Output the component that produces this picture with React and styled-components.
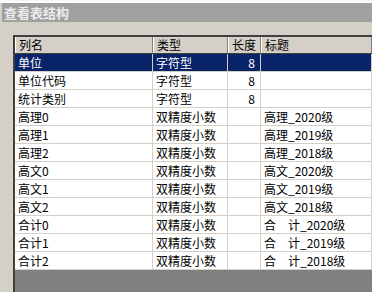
import React from 'react'
import styled, { createGlobalStyle } from 'styled-components'

const GlobalStyle = createGlobalStyle`
  html, body {
    margin: 0;
    padding: 0;
    background: #d4d0c8;
  }
  body {
    font-family: "Noto Sans CJK SC", "Liberation Sans", sans-serif;
    font-size: 12px;
  }
`

const Window = styled.div`
  width: 372px;
  height: 292px;
  background: #d4d0c8;
  display: flex;
  flex-direction: column;
  overflow: hidden;
`

const TopStrip = styled.div`
  height: 3px;
  background: #ffffff;
  border-top: 1px solid #f4f4f4;
  box-sizing: border-box;
`

const TitleBar = styled.div`
  height: 19px;
  margin-left: 2px;
  padding-left: 2px;
  background: #a0a0a0;
  color: #ececec;
  font-weight: bold;
  font-size: 13px;
  line-height: 19px;
  letter-spacing: 0;
`

const Body = styled.div`
  flex: 1;
  display: flex;
  padding: 13px 0 0 13px;
  min-height: 0;
`

const Grid = styled.div`
  flex: 1;
  display: flex;
  flex-direction: column;
  background: #808080;
  border-top: 2px solid #404040;
  border-left: 2px solid #404040;
  box-shadow: inset 1px 1px 0 #808080;
  min-width: 0;
`

const Row = styled.div`
  display: grid;
  grid-template-columns: 138px 75px 33px 1fr;
  height: ${({ $head }) => ($head ? '17px' : '18px')};
  background: ${({ $head, $selected }) =>
    $head ? '#d4d0c8' : $selected ? '#0a246a' : '#ffffff'};
  color: ${({ $selected }) => ($selected ? '#ffffff' : '#000000')};
  border-bottom: 1px solid ${({ $head }) => ($head ? '#404040' : '#d4d0c8')};
  box-sizing: border-box;
`

const Cell = styled.div`
  display: flex;
  align-items: center;
  justify-content: ${({ $right }) => ($right ? 'flex-end' : 'flex-start')};
  padding: ${({ $right }) => ($right ? '0 5px 0 0' : '0 0 0 3px')};
  border-right: 1px solid ${({ $head }) => ($head ? '#808080' : '#d4d0c8')};
  border-left: ${({ $head }) => ($head ? '1px solid #ffffff' : 'none')};
  white-space: pre;
  overflow: hidden;
  line-height: 16px;
`

const columns = ['列名', '类型', '长度', '标题']

const rows = [
  ['单位', '字符型', '8', ''],
  ['单位代码', '字符型', '8', ''],
  ['统计类别', '字符型', '8', ''],
  ['高理0', '双精度小数', '', '高理_2020级'],
  ['高理1', '双精度小数', '', '高理_2019级'],
  ['高理2', '双精度小数', '', '高理_2018级'],
  ['高文0', '双精度小数', '', '高文_2020级'],
  ['高文1', '双精度小数', '', '高文_2019级'],
  ['高文2', '双精度小数', '', '高文_2018级'],
  ['合计0', '双精度小数', '', '合　计_2020级'],
  ['合计1', '双精度小数', '', '合　计_2019级'],
  ['合计2', '双精度小数', '', '合　计_2018级'],
]

const App = () => {
  return (
    <>
      <GlobalStyle />
      <Window>
        <TopStrip />
        <TitleBar>查看表结构</TitleBar>
        <Body>
          <Grid>
            <Row $head>
              {columns.map((c) => (
                <Cell $head key={c}>{c}</Cell>
              ))}
            </Row>
            {rows.map((r, i) => (
              <Row key={i} $selected={i === 0}>
                <Cell>{r[0]}</Cell>
                <Cell>{r[1]}</Cell>
                <Cell $right>{r[2]}</Cell>
                <Cell>{r[3]}</Cell>
              </Row>
            ))}
          </Grid>
        </Body>
      </Window>
    </>
  )
}

export default App
